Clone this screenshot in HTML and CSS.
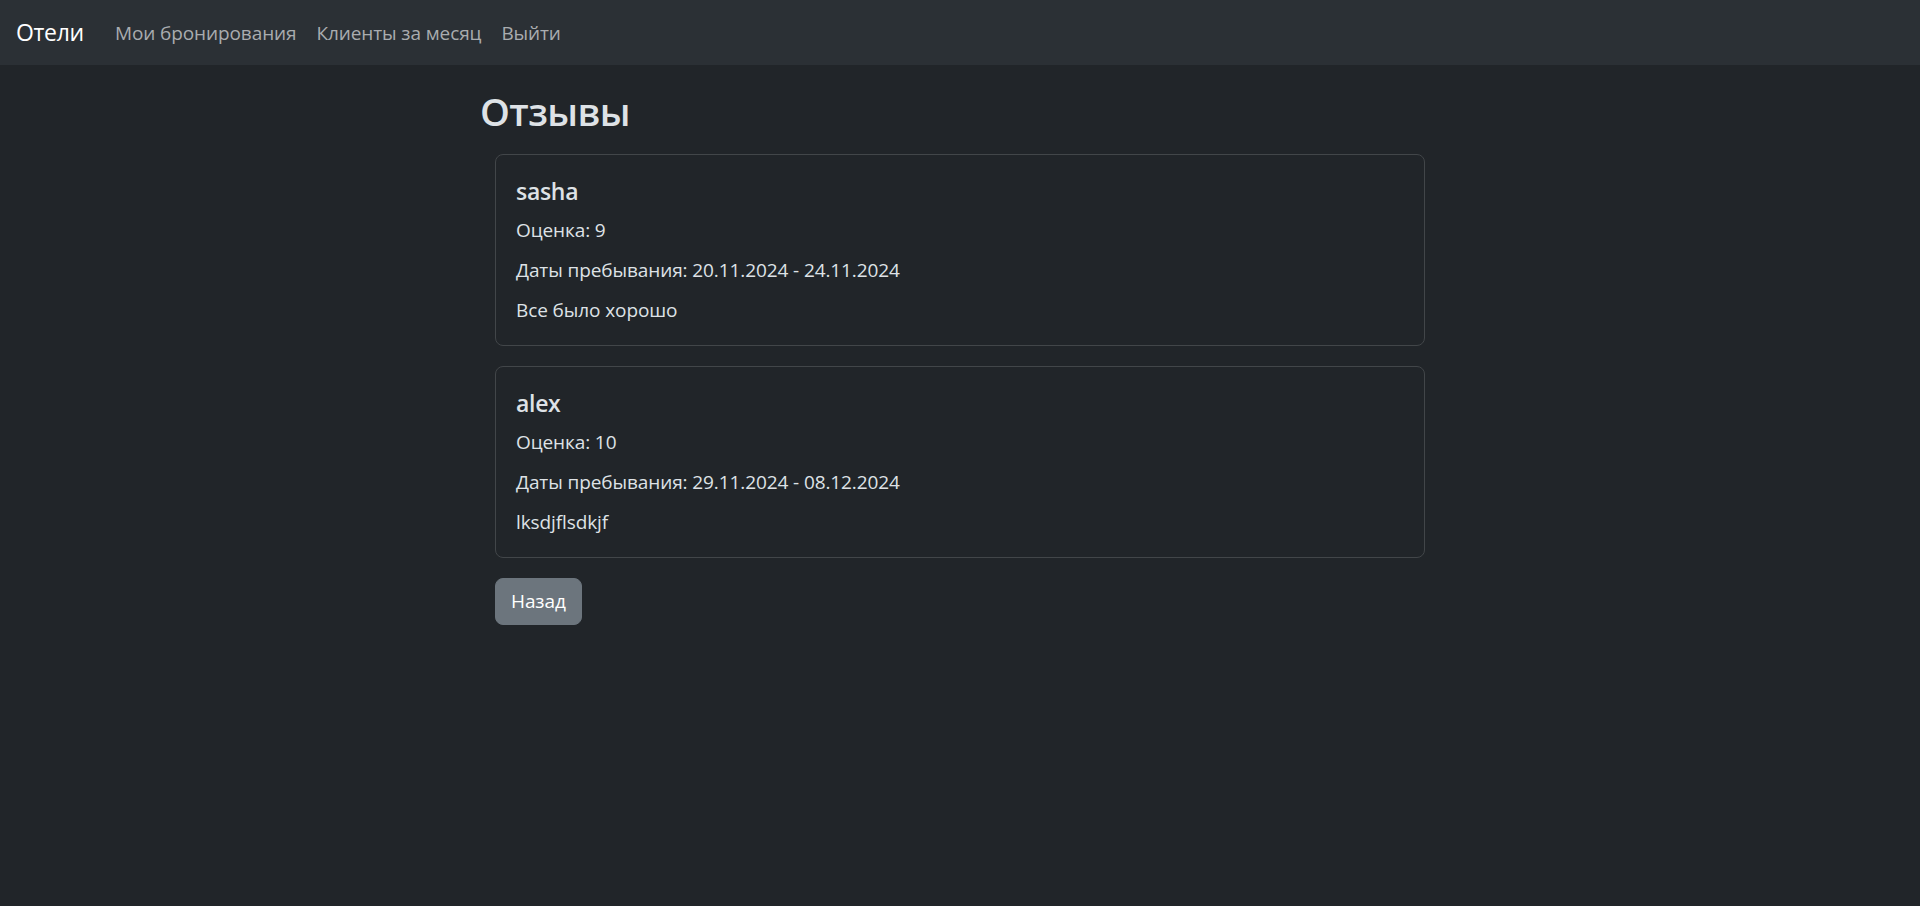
FILE: index.html
```html
<!DOCTYPE html>
<html lang="ru">
<head>
<meta charset="utf-8">
<title>Отзывы</title>
<link rel="stylesheet" href="styles.css">
</head>
<body>
<nav class="navbar">
  <a class="brand" href="#">Отели</a>
  <ul class="nav">
    <li><a class="nav-link" href="#">Мои бронирования</a></li>
    <li><a class="nav-link" href="#">Клиенты за месяц</a></li>
    <li><a class="nav-link" href="#">Выйти</a></li>
  </ul>
</nav>
<main class="container">
  <h2 class="page-title">Отзывы</h2>
  <div class="reviews">
    <div class="card">
      <h5 class="card-title">sasha</h5>
      <p class="card-text">Оценка: 9</p>
      <p class="card-text">Даты пребывания: 20.11.2024 - 24.11.2024</p>
      <p class="card-text">Все было хорошо</p>
    </div>
    <div class="card">
      <h5 class="card-title">alex</h5>
      <p class="card-text">Оценка: 10</p>
      <p class="card-text">Даты пребывания: 29.11.2024 - 08.12.2024</p>
      <p class="card-text">lksdjflsdkjf</p>
    </div>
    <div class="actions">
      <a class="btn" href="#">Назад</a>
    </div>
  </div>
</main>
</body>
</html>
```

FILE: styles.css
```css
* { box-sizing: border-box; }
html, body { margin: 0; padding: 0; }
body {
  background: #212529;
  color: #dee2e6;
  font-family: "Open Sans", "Noto Sans", "DejaVu Sans", sans-serif;
  font-size: 20px;
  line-height: 30px;
  min-height: 906px;
}
a { text-decoration: none; }

.navbar {
  height: 65px;
  background: #2b3035;
  display: flex;
  align-items: center;
  padding: 0 16px;
}
.brand {
  color: #ffffff;
  font-size: 23px;
  line-height: 30px;
  letter-spacing: -0.3px;
  margin-right: 31px;
  padding-bottom: 2px;
}
.nav {
  list-style: none;
  margin: 0;
  padding: 0;
  display: flex;
  gap: 20px;
}
.nav-link {
  color: #a9acaf;
  font-size: 19px;
  letter-spacing: -0.1px;
  line-height: 30px;
}

.container {
  width: 960px;
  margin: 0 auto;
  padding-top: 22px;
}
.page-title {
  margin: 0 0 19px 0;
  font-size: 38px;
  line-height: 48px;
  font-weight: 600;
  letter-spacing: -0.6px;
  color: #dee2e6;
}
.reviews {
  padding: 0 15px;
  display: flex;
  flex-direction: column;
  gap: 20px;
}
.card {
  border: 1px solid #424649;
  border-radius: 8px;
  padding: 21px 20px 20px;
  background: #212529;
}
.card-title {
  margin: 0 0 9px 0;
  font-size: 23px;
  line-height: 30px;
  font-weight: 600;
  letter-spacing: -0.3px;
}
.card-text {
  margin: 0 0 10px 0;
  font-size: 19px;
  letter-spacing: -0.1px;
}
.card-text:last-child { margin-bottom: 0; }

.actions { display: flex; }
.btn {
  display: inline-block;
  background: #6c757d;
  border: 1px solid #6c757d;
  border-radius: 8px;
  color: #ffffff;
  font-size: 19px;
  line-height: 30px;
  letter-spacing: -0.1px;
  padding: 7px 15px 8px;
}
```
